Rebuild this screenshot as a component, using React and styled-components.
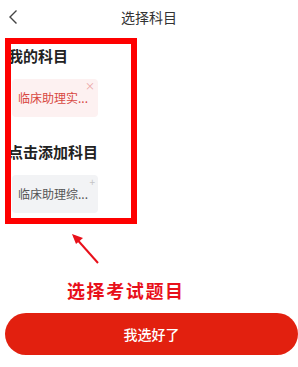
import styled, { createGlobalStyle } from "styled-components";

const Global = createGlobalStyle`
  html, body {
    margin: 0;
    padding: 0;
    background: #ffffff;
    font-family: "Noto Sans CJK SC", "Noto Sans", sans-serif;
  }
`;

export default function App() {
  return (
    <Page>
      <Global />
      <Header>
        <Back>
          <svg width="10" height="16" viewBox="0 0 10 16">
            <path d="M8.5 1.5 L2 8 L8.5 14.5" fill="none" stroke="#444" strokeWidth="1.4" />
          </svg>
        </Back>
        <Title>选择科目</Title>
      </Header>

      <Content>
        <SectionTitle>我的科目</SectionTitle>
        <Chip $variant="mine">
          <ChipText>临床助理实...</ChipText>
          <Corner $variant="mine">×</Corner>
        </Chip>

        <SectionTitle $gap={24}>点击添加科目</SectionTitle>
        <Chip $variant="add">
          <ChipText>临床助理综...</ChipText>
          <Corner $variant="add">+</Corner>
        </Chip>
      </Content>

      <Spacer />
      <Submit>我选好了</Submit>

      <MarkBox />
      <Arrow width="40" height="40" viewBox="0 0 40 40">
        <path d="M29 31 L5 4" stroke="#e8101a" strokeWidth="2" fill="none" />
        <path d="M3 2 L14 6 L7 12 Z" fill="#e8101a" />
      </Arrow>
      <Caption>选择考试题目</Caption>
    </Page>
  );
}

const Page = styled.div`
  position: relative;
  width: 298px;
  height: 367px;
  display: flex;
  flex-direction: column;
  overflow: hidden;
`;

const Header = styled.div`
  height: 34px;
  display: flex;
  align-items: center;
  justify-content: center;
  position: relative;
`;

const Back = styled.div`
  position: absolute;
  left: 8px;
  top: 9px;
  display: flex;
`;

const Title = styled.div`
  font-size: 14px;
  color: #333;
`;

const Content = styled.div`
  padding: 0 0 0 8px;
  display: flex;
  flex-direction: column;
  align-items: flex-start;
`;

const SectionTitle = styled.div`
  margin-top: ${(p) => p.$gap || 11}px;
  font-size: 15px;
  font-weight: 700;
  line-height: 22px;
  color: #222;
`;

const Chip = styled.div`
  position: relative;
  margin-top: 12px;
  margin-left: 4px;
  width: 86px;
  height: 38px;
  box-sizing: border-box;
  padding-left: 6px;
  display: flex;
  align-items: center;
  border-radius: 4px;
  background: ${(p) => (p.$variant === "mine" ? "#fdf1f1" : "#f2f3f5")};
  color: ${(p) => (p.$variant === "mine" ? "#d8473f" : "#555")};
`;

const ChipText = styled.span`
  font-size: 12px;
  line-height: 16px;
  white-space: nowrap;
`;

const Corner = styled.span`
  position: absolute;
  right: 3px;
  top: 2px;
  font-size: 10px;
  line-height: 10px;
  color: ${(p) => (p.$variant === "mine" ? "#eaa3a3" : "#c4c4c4")};
`;

const Spacer = styled.div`
  flex: 1;
`;

const Submit = styled.button`
  margin: 0 0 12px 5px;
  width: 293px;
  height: 42px;
  border: none;
  border-radius: 21px;
  background: #e2200f;
  color: #fff;
  font-family: inherit;
  font-size: 14px;
  font-weight: 500;
`;

const MarkBox = styled.div`
  position: absolute;
  left: 5px;
  top: 38px;
  width: 132px;
  height: 186px;
  box-sizing: border-box;
  border: 6px solid #fe0000;
  pointer-events: none;
`;

const Arrow = styled.svg`
  position: absolute;
  left: 69px;
  top: 232px;
`;

const Caption = styled.div`
  position: absolute;
  left: 67px;
  top: 279px;
  font-size: 18px;
  font-weight: 700;
  letter-spacing: 1.6px;
  line-height: 22px;
  color: #e8101a;
`;
